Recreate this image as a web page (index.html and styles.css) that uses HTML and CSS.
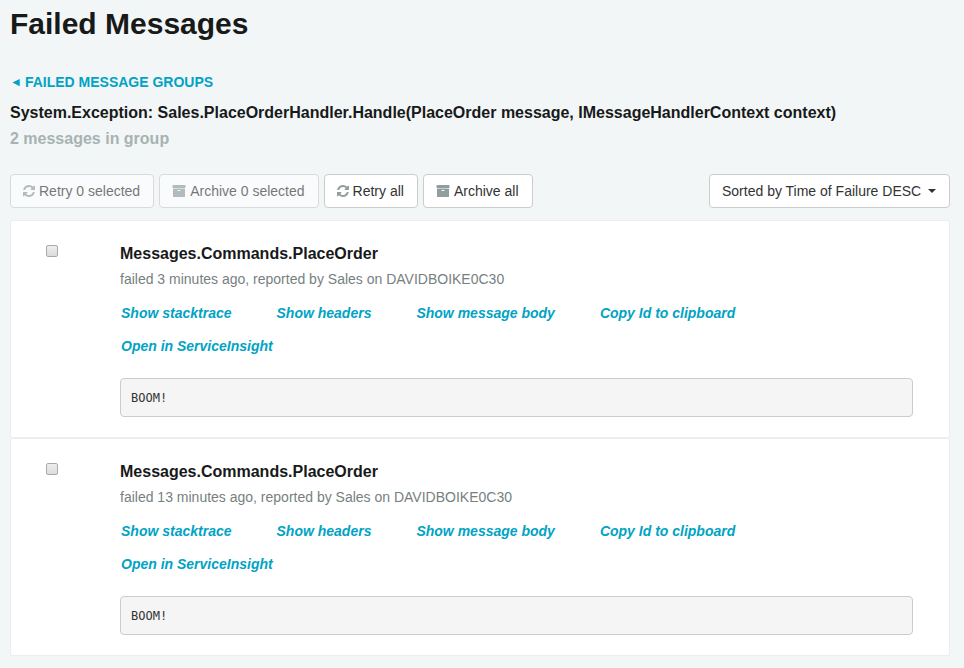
FILE: index.html
```html
<!DOCTYPE html>
<html lang="en">
<head>
<meta charset="utf-8">
<meta name="viewport" content="width=device-width, initial-scale=1">
<title>Failed Messages</title>
<link rel="stylesheet" href="styles.css">
</head>
<body>
<svg class="sprite" aria-hidden="true">
  <symbol id="refresh" viewBox="128 128 1536 1536"><path d="M1639 1056q0 5-1 7-64 268-268 434.500t-478 166.500q-146 0-282.500-55t-243.500-157l-129 129q-19 19-45 19t-45-19-19-45v-448q0-26 19-45t45-19h448q26 0 45 19t19 45-19 45l-137 137q71 66 161 102t187 36q134 0 250-65t186-179q11-17 53-117 8-23 30-23h192q13 0 22.500 9.500t9.500 22.500zm25-800v448q0 26-19 45t-45 19h-448q-26 0-45-19t-19-45 19-45l138-138q-148-137-349-137-134 0-250 65t-186 179q-11 17-53 117-8 23-30 23h-199q-13 0-22.500-9.500t-9.500-22.500v-7q65-268 270-434.500t480-166.500q146 0 284 55.500t245 156.500l130-129q19-19 45-19t45 19 19 45z"/></symbol>
  <symbol id="archive" viewBox="0 128 1792 1536"><path d="M1088 832q0-26-19-45t-45-19h-256q-26 0-45 19t-19 45 19 45 45 19h256q26 0 45-19t19-45zm576-192v960q0 26-19 45t-45 19h-1408q-26 0-45-19t-19-45v-960q0-26 19-45t45-19h1408q26 0 45 19t19 45zm64-448v256q0 26-19 45t-45 19h-1536q-26 0-45-19t-19-45v-256q0-26 19-45t45-19h1536q26 0 45 19t19 45z"/></symbol>
</svg>
<main class="page">
  <h1 class="title">Failed Messages</h1>
  <a class="back" href="#groups"><span class="arrow">◄</span>FAILED MESSAGE GROUPS</a>
  <h2 class="group-name">System.Exception: Sales.PlaceOrderHandler.Handle(PlaceOrder message, IMessageHandlerContext context)</h2>
  <p class="group-count">2 messages in group</p>

  <div class="toolbar">
    <button class="btn" type="button" disabled><svg class="icon" aria-hidden="true"><use href="#refresh"/></svg>Retry 0 selected</button>
    <button class="btn" type="button" disabled><svg class="icon icon-wide" aria-hidden="true"><use href="#archive"/></svg>Archive 0 selected</button>
    <button class="btn" type="button"><svg class="icon" aria-hidden="true"><use href="#refresh"/></svg>Retry all</button>
    <button class="btn" type="button"><svg class="icon icon-wide" aria-hidden="true"><use href="#archive"/></svg>Archive all</button>
    <div class="sort">
      <select class="btn sort-select" aria-label="Sort order">
        <option>Sorted by Time of Failure DESC</option>
      </select>
      <span class="caret"></span>
    </div>
  </div>

  <section class="messages">
    <article class="message">
      <input class="check" type="checkbox" aria-label="Select message">
      <div class="body">
        <h3 class="type">Messages.Commands.PlaceOrder</h3>
        <p class="meta">failed 3 minutes ago, reported by Sales on DAVIDBOIKE0C30</p>
        <div class="actions">
          <a href="#stacktrace">Show stacktrace</a>
          <a href="#headers">Show headers</a>
          <a href="#body">Show message body</a>
          <a href="#copy">Copy Id to clipboard</a>
          <a href="#insight">Open in ServiceInsight</a>
        </div>
        <pre class="error">BOOM!</pre>
      </div>
    </article>
    <article class="message">
      <input class="check" type="checkbox" aria-label="Select message">
      <div class="body">
        <h3 class="type">Messages.Commands.PlaceOrder</h3>
        <p class="meta">failed 13 minutes ago, reported by Sales on DAVIDBOIKE0C30</p>
        <div class="actions">
          <a href="#stacktrace">Show stacktrace</a>
          <a href="#headers">Show headers</a>
          <a href="#body">Show message body</a>
          <a href="#copy">Copy Id to clipboard</a>
          <a href="#insight">Open in ServiceInsight</a>
        </div>
        <pre class="error">BOOM!</pre>
      </div>
    </article>
  </section>
</main>
</body>
</html>
```
FILE: styles.css
```css
* { box-sizing: border-box; }

body {
  margin: 0;
  background: #f2f6f7;
  color: #181919;
  font: 14px/20px "Liberation Sans", Arial, sans-serif;
}

h1, h2, h3, p, pre { margin: 0; }

.sprite { display: none; }

.page { padding: 6px 14px 12px 10px; }

.title {
  margin-bottom: 30px;
  font-size: 30px;
  line-height: 36px;
}

.back {
  display: flex;
  gap: 3px;
  margin-bottom: 10px;
  color: #00a3c4;
  font-weight: bold;
  text-decoration: none;
}

.arrow { font-size: 12px; }

.group-name, .type {
  font-size: 16px;
  line-height: 22px;
}

.group-count {
  margin: 5px 0 25px;
  color: #a8b3b1;
  font-size: 16px;
  font-weight: bold;
}

.toolbar {
  display: flex;
  flex-wrap: wrap;
  gap: 5px;
  margin-bottom: 12px;
}

.btn {
  display: flex;
  align-items: center;
  gap: 4px;
  height: 34px;
  padding: 0 13px 0 12px;
  border: 1px solid #ccc;
  border-radius: 4px;
  background: #fff;
  color: #333;
  font: inherit;
}

.btn:disabled { opacity: 0.65; }

.icon {
  width: 12px;
  height: 12px;
  fill: #929e9e;
}

.icon-wide { width: 14px; }

.sort {
  position: relative;
  margin-left: auto;
}

.sort-select {
  appearance: none;
  padding-right: 27px;
}

.caret {
  position: absolute;
  top: 15px;
  right: 14px;
  border: 4px solid transparent;
  border-top-color: #333;
  border-bottom: 0;
  pointer-events: none;
}

.message {
  display: flex;
  padding: 22px 36px 20px 35px;
  border: 1px solid #eaeeee;
  border-radius: 2px;
  background: #fff;
}

.check {
  appearance: none;
  flex: none;
  width: 12px;
  height: 12px;
  margin: 2px 62px 0 0;
  border: 1px solid #aaa;
  border-radius: 2px;
  background: linear-gradient(#eee, #dcdcdc);
}

.check:checked { background: #00a3c4; }

.body { flex: 1; }

.meta {
  margin-top: 4px;
  color: #777f7f;
}

.actions {
  display: flex;
  flex-wrap: wrap;
  gap: 13px 45px;
  margin: 14px 0 22px;
  padding: 0 1px;
}

.actions a {
  color: #00a3c4;
  font-style: italic;
  font-weight: bold;
  text-decoration: none;
}

.error {
  padding: 10px 10px 8px;
  border: 1px solid #ccc;
  border-radius: 4px;
  background: #f5f5f5;
  color: #333;
  font: 12px/19px "DejaVu Sans Mono", monospace;
}
```
